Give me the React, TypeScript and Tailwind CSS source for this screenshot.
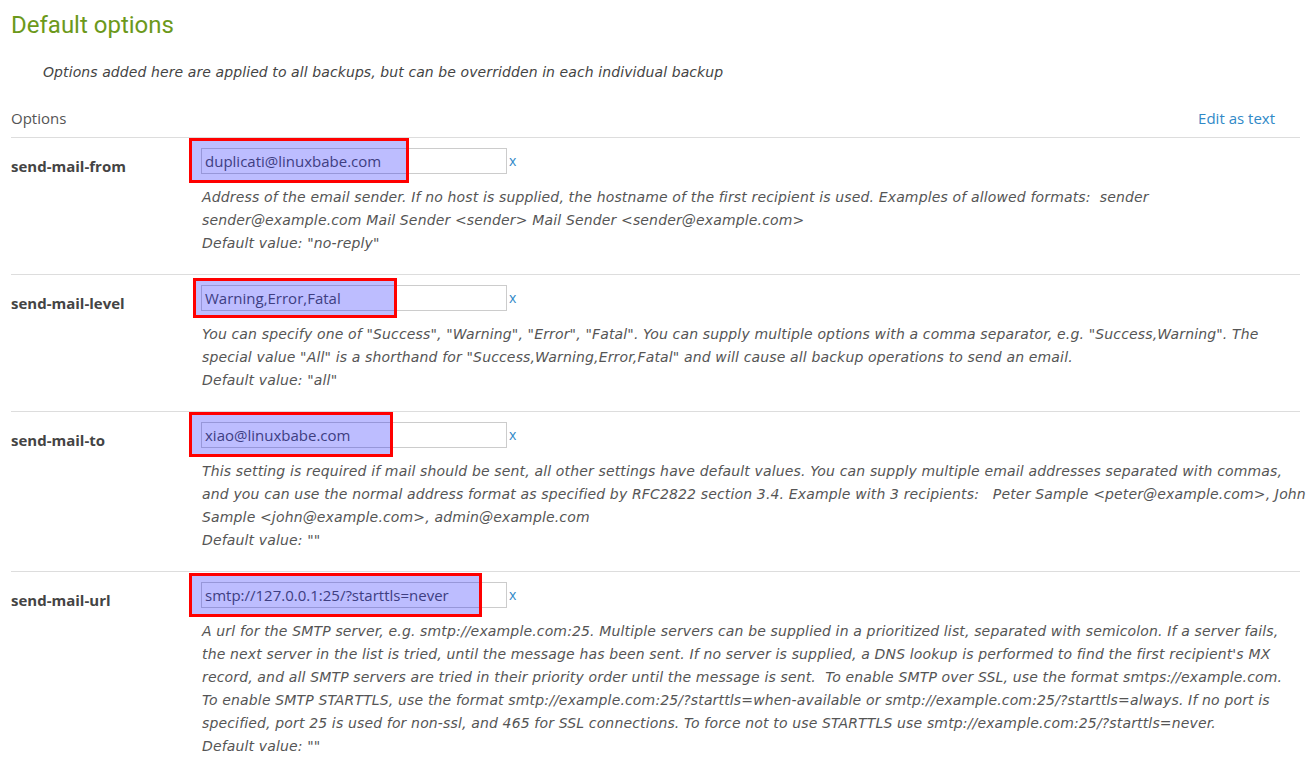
const rows = [
  {
    name: "send-mail-from",
    value: "duplicati@linuxbabe.com",
    mark: "-left-[12px] -top-[10px] w-[220px] h-[45px]",
    lines: [
      "Address of the email sender. If no host is supplied, the hostname of the first recipient is used. Examples of allowed formats:  sender",
      "sender@example.com Mail Sender <sender> Mail Sender <sender@example.com>",
      'Default value: "no-reply"',
    ],
  },
  {
    name: "send-mail-level",
    value: "Warning,Error,Fatal",
    mark: "-left-[8px] -top-[7px] w-[204px] h-[40px]",
    lines: [
      'You can specify one of "Success", "Warning", "Error", "Fatal". You can supply multiple options with a comma separator, e.g. "Success,Warning". The',
      'special value "All" is a shorthand for "Success,Warning,Error,Fatal" and will cause all backup operations to send an email.',
      'Default value: "all"',
    ],
  },
  {
    name: "send-mail-to",
    value: "xiao@linuxbabe.com",
    mark: "-left-[12px] -top-[10px] w-[204px] h-[45px]",
    lines: [
      "This setting is required if mail should be sent, all other settings have default values. You can supply multiple email addresses separated with commas,",
      "and you can use the normal address format as specified by RFC2822 section 3.4. Example with 3 recipients:   Peter Sample <peter@example.com>, John",
      "Sample <john@example.com>, admin@example.com",
      'Default value: ""',
    ],
  },
  {
    name: "send-mail-url",
    value: "smtp://127.0.0.1:25/?starttls=never",
    mark: "-left-[12px] -top-[9px] w-[293px] h-[44px]",
    lines: [
      "A url for the SMTP server, e.g. smtp://example.com:25. Multiple servers can be supplied in a prioritized list, separated with semicolon. If a server fails,",
      "the next server in the list is tried, until the message has been sent. If no server is supplied, a DNS lookup is performed to find the first recipient's MX",
      "record, and all SMTP servers are tried in their priority order until the message is sent.  To enable SMTP over SSL, use the format smtps://example.com.",
      "To enable SMTP STARTTLS, use the format smtp://example.com:25/?starttls=when-available or smtp://example.com:25/?starttls=always. If no port is",
      "specified, port 25 is used for non-ssl, and 465 for SSL connections. To force not to use STARTTLS use smtp://example.com:25/?starttls=never.",
      'Default value: ""',
    ],
  },
];

function OptionRow({ row }: { row: (typeof rows)[number] }) {
  return (
    <div className="grid grid-cols-[190px_1fr] border-b border-[#dddddd] pt-[10px] pb-[19px]">
      <div className="pt-[8px] text-[15px] leading-[20px] font-bold text-[#444444]">{row.name}</div>
      <div>
        <div className="flex items-center">
          <div className="relative">
            <div className="w-[306px] h-[26px] border border-[#cccccc] bg-white pl-[3px] text-[15px] leading-[24px] text-[#555555]">
              {row.value}
            </div>
            {/* highlight annotation */}
            <div className={"absolute border-[3px] border-[#ff0000] bg-[rgba(0,0,255,0.26)] " + row.mark} />
          </div>
          <span className="ml-[2px] -mt-[2px] text-[14px] text-[#3089c7]">x</span>
        </div>
        <div className="mt-[12px] pl-[1px] italic text-[14px] leading-[23px] tracking-[0.15px] text-[#555555] whitespace-pre font-['DejaVu_Sans',sans-serif]">
          {row.lines.map((l, i) => (
            <div key={i}>{l}</div>
          ))}
        </div>
      </div>
    </div>
  );
}

export default function App() {
  return (
    <div
      className="h-[758px] overflow-hidden bg-white pl-[11px] pr-[16px]"
      style={{ fontFamily: '"Open Sans", sans-serif' }}
    >
      <h1 className="pt-[9px] text-[24px] leading-[32px] text-[#6c991b] font-['Roboto',sans-serif]">Default options</h1>
      <p className="mt-[21px] pl-[32px] italic text-[14px] leading-[20px] tracking-[0.09px] text-[#444444] font-['DejaVu_Sans',sans-serif]">
        Options added here are applied to all backups, but can be overridden in each individual backup
      </p>
      <div className="mt-[26px] flex justify-between border-b border-[#dddddd] pb-[9px] pr-[25px] text-[15px] leading-[20px]">
        <span className="text-[#555555]">Options</span>
        <a className="text-[#3089c7]">Edit as text</a>
      </div>
      {rows.map((r) => (
        <OptionRow key={r.name} row={r} />
      ))}
    </div>
  );
}
